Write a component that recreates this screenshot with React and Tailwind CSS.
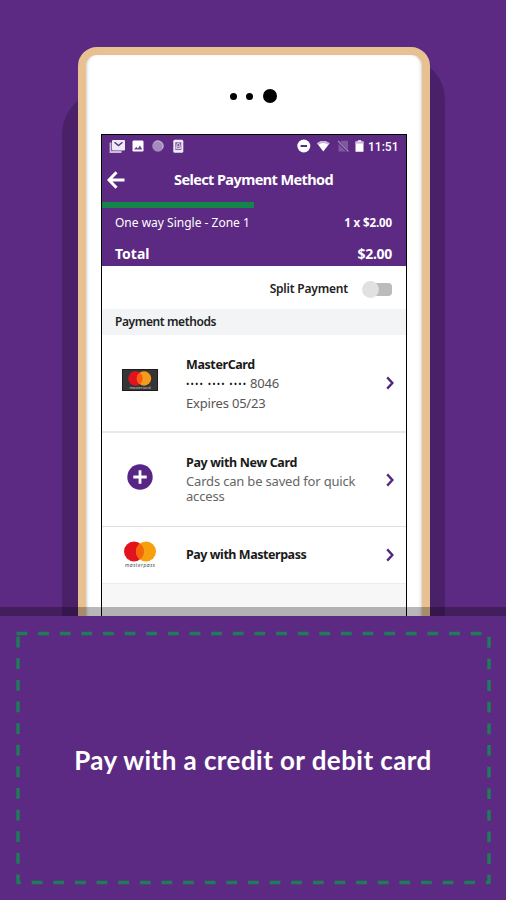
const DOTS = "•••• •••• ••••";

function Chevron() {
    return (
        <svg className="w-2 h-[14px] shrink-0" viewBox="0 0 8 14" fill="none">
            <path d="M1.2 1.4 L6.4 7 L1.2 12.6" stroke="#512480" strokeWidth="2.3" />
        </svg>
    );
}

function StatusBar() {
    return (
        <div className="flex items-center justify-between h-[23px] pl-[7px] pr-2">
            <svg className="w-[76px] h-4 -mt-px" viewBox="0 0 76 16">
                {/* mail stack */}
                <path d="M1.5 4.5 V14 H12.5" fill="none" stroke="#cdbddd" strokeWidth="1.8" />
                <rect x="3" y="2" width="13" height="10.5" rx="1" fill="#efe9f5" />
                <path d="M5.5 4.2 L9.5 7.6 L13.5 4.2" fill="none" stroke="#5c2a82" strokeWidth="1.3" />
                {/* picture */}
                <rect x="23.5" y="2.5" width="11" height="11" rx="1.2" fill="#fff" />
                <path d="M25 11.5 L27.3 8.8 L28.8 10.4 L31 7.5 L33.3 11.5 Z" fill="#6c4192" />
                {/* sync */}
                <circle cx="49" cy="8" r="5.8" fill="#a58abd" />
                <path d="M45 4.5 A5.3 5.3 0 0 1 53.5 10.5" fill="none" stroke="#c5b3d5" strokeWidth="1" />
                {/* phone lock */}
                <rect x="64.3" y="1.7" width="10" height="13" rx="1.5" fill="#efe9f5" />
                <rect x="66.3" y="4.3" width="6" height="7.7" fill="#7d5a9e" />
                <path d="M67.8 8 V6.8 A1.5 1.5 0 0 1 70.8 6.8 V8 M67.2 8.8 H71.4 V10.6 H67.2 Z" fill="none" stroke="#efe9f5" strokeWidth="0.9" />
            </svg>
            <div className="flex items-center">
                <svg className="w-[70px] h-4 -mt-px mr-px" viewBox="0 0 70 16">
                    <circle cx="6.8" cy="8" r="6.5" fill="#fff" />
                    <rect x="3.6" y="7" width="6.4" height="2" fill="#5c2a82" />
                    <path d="M20 5.3 Q26.3 0.6 32.6 5.3 L26.3 13.5 Z" fill="#fff" />
                    <path d="M20 5.3 Q26.3 0.6 32.6 5.3 L31.4 6.8 Q26.3 3.4 21.2 6.8 Z" fill="#c5b3d5" />
                    {/* no sim */}
                    <path d="M44.5 2.8 H51 V13.5 H41.5 V5.8 Z" fill="#7d5a9e" />
                    <path d="M40.5 3 L51.5 14" stroke="#5c2a82" strokeWidth="2.6" />
                    <path d="M41 3 L51.5 13.5" stroke="#a58abd" strokeWidth="1.1" />
                    <path d="M60.8 2.2 H64.2 V3.6 H66.5 V13.8 H58.5 V3.6 H60.8 Z" fill="#fff" />
                    <rect x="58.5" y="3.6" width="8" height="2" fill="#c9b9d8" />
                </svg>
                <span className="font-['Roboto'] font-medium text-[12px] leading-none w-[30px] whitespace-nowrap">11:51</span>
            </div>
        </div>
    );
}

function MasterCardMark() {
    return (
        <svg className="w-9 h-[22px]" viewBox="0 0 36 22">
            <rect x="0.5" y="0.5" width="35" height="21" fill="#373536" stroke="#1c1c1c" />
            <circle cx="13.5" cy="9.5" r="7.2" fill="#e2121f" />
            <circle cx="22" cy="9.5" r="7.2" fill="#f59b1c" />
            <path d="M17.75 3.7 A7.2 7.2 0 0 1 17.75 15.3 A7.2 7.2 0 0 1 17.75 3.7" fill="#ff5b10" />
            <text x="18" y="19.6" textAnchor="middle" textLength="21" fontSize="3.8" fontFamily="Open Sans, sans-serif" fill="#ddd">mastercard</text>
        </svg>
    );
}

function MasterpassMark() {
    return (
        <svg className="w-9 h-7" viewBox="0 0 36 28">
            <circle cx="12" cy="10.5" r="10" fill="#e2121f" />
            <circle cx="24" cy="10.5" r="10" fill="#f5a00c" />
            <path d="M18 2.5 A10 10 0 0 1 18 18.5 A10 10 0 0 1 18 2.5" fill="#f5660c" />
            <text x="18" y="25.5" textAnchor="middle" textLength="30" fontSize="5" fontStyle="italic" fontFamily="Open Sans, sans-serif" fill="#333">masterpass</text>
        </svg>
    );
}

function NewCardMark() {
    return (
        <svg className="w-[26px] h-[26px]" viewBox="0 0 26 26">
            <circle cx="13" cy="13" r="12.7" fill="#572586" />
            <path d="M13 6.3 V19.7 M6.3 13 H19.7" stroke="#fff" strokeWidth="2.8" />
        </svg>
    );
}

function PhoneScreen() {
    return (
        <div className="w-[306px] h-[500px] border-[1.5px] border-black bg-[#f7f7f7] font-['Noto_Sans',sans-serif]">
            <div className="h-[131px] bg-[#5c2a82] text-white">
                <StatusBar />
                <div className="flex items-center h-11 pl-[5px]">
                    <svg className="w-[18px] h-[18px]" viewBox="0 0 18 18" fill="none">
                        <path d="M9.5 1.2 L2 9 L9.5 16.8 M2 9 H17.5" stroke="#fff" strokeWidth="3" />
                    </svg>
                    <h1 className="ml-[49px] -mt-[2px] font-bold text-[14.5px] tracking-[-0.6px] leading-none whitespace-nowrap">Select Payment Method</h1>
                </div>
                <div className="w-[152px] h-[6px] bg-[#138548]" />
                <div className="flex justify-between items-center h-[29px] pl-[13px] pr-[14px] text-[12px]">
                    <span>One way Single - Zone 1</span>
                    <span className="font-bold text-[11.5px] tracking-[-0.1px]">1 x $2.00</span>
                </div>
                <div className="flex justify-between items-center h-[29px] pl-[13px] pr-[14px] pt-[3px] font-bold text-[14px]">
                    <span>Total</span>
                    <span className="tracking-[-0.3px]">$2.00</span>
                </div>
            </div>
            <div className="flex items-center justify-end h-[43px] pr-[14px] pt-[3px] bg-white">
                <span className="font-semibold text-[12px] tracking-[-0.2px] text-[#222]">Split Payment</span>
                <div className="flex items-center ml-[14px] w-[30px] h-[17px]">
                    <div className="w-[17px] h-[17px] rounded-full bg-[#e1e1e1] shrink-0 z-10" />
                    <div className="w-[21px] h-[13px] -ml-2 rounded-[4px] bg-[#bbb] shrink-0" />
                </div>
            </div>
            <div className="flex items-center h-[26px] pl-[13px] pb-px bg-[#f2f4f6] font-semibold text-[12px] tracking-[-0.4px] text-[#222]">
                Payment methods
            </div>

            <div className="flex items-center h-[98px] bg-white border-b-2 border-[#e9e9e9] pr-3">
                <div className="flex justify-center items-center w-[75px] pb-[6px]"><MasterCardMark /></div>
                <div className="flex-1 pl-[9px] pt-[2px] text-[13px] tracking-[-0.2px] leading-[19.5px] text-[#555]">
                    <p className="font-bold text-[12.5px] tracking-[-0.4px] text-[#1a1a1a]">MasterCard</p>
                    <p className="flex items-center">
                        <span className="w-16 text-[#111] text-[9px] tracking-[1.15px] whitespace-nowrap">{DOTS}</span>
                        <span>8046</span>
                    </p>
                    <p>Expires 05/23</p>
                </div>
                <Chevron />
            </div>
            <div className="flex items-center h-[94px] bg-white border-b border-[#dedede] pr-3">
                <div className="flex justify-center w-[75px] pb-[5px]"><NewCardMark /></div>
                <div className="flex-1 pl-[9px] pb-[3px] text-[13px] tracking-[-0.18px] leading-[15.5px] text-[#666]">
                    <p className="font-bold text-[12.5px] tracking-[-0.35px] leading-[22px] text-[#1a1a1a]">Pay with New Card</p>
                    <p className="whitespace-nowrap">Cards can be saved for quick<br />access</p>
                </div>
                <Chevron />
            </div>
            <div className="flex items-center h-[57px] bg-white border-b border-[#ececec] pr-3">
                <div className="flex justify-center w-[75px]"><MasterpassMark /></div>
                <p className="flex-1 pl-[9px] font-bold text-[12.5px] tracking-[-0.45px] text-[#1a1a1a]">Pay with Masterpass</p>
                <Chevron />
            </div>
        </div>
    );
}

export default function App() {
    return (
        <div className="w-[506px] h-[900px] bg-[#5c2a82] overflow-hidden">
            <section className="relative h-[616px] overflow-hidden pt-[47px] pl-[78px]">
                {/* shadow cast by the phone */}
                <div className="absolute left-[62px] top-[90px] w-[200px] h-[560px] rounded-tl-[45px] bg-[#4a2068]" />
                <div className="absolute left-[245px] top-[59px] w-[200px] h-[600px] rounded-tr-[40px] bg-[#4a2068]" />
                <div className="relative w-[352px] h-[640px] rounded-[19px] border-8 border-[#e8c193] bg-white pl-[15px] shadow-[inset_3px_0_3px_-2px_#ccc,inset_-3px_0_3px_-2px_#ccc]">
                    <div className="flex items-center h-[79px] pl-[129px] pt-[3px]">
                        <div className="w-[7px] h-[7px] rounded-full bg-black" />
                        <div className="w-[7px] h-[7px] rounded-full bg-black ml-[9px]" />
                        <div className="w-[14px] h-[14px] rounded-full bg-black ml-[10px]" />
                    </div>
                    <PhoneScreen />
                </div>
                <div className="absolute inset-x-0 bottom-0 h-[9px] bg-black/28" />
            </section>
            <section className="relative flex justify-center items-center h-[284px] pt-[3px]">
                <svg className="absolute inset-0 w-full h-full" viewBox="0 616 506 284" fill="none">
                    <path d="M16.5 633.5 H489 V882.5 H18 V633.5" stroke="#1f7c58" strokeWidth="3.4" strokeDasharray="10.8 10.83" />
                </svg>
                <p className="font-['Lato',sans-serif] font-bold text-[26px] tracking-[0.43px] leading-none text-white whitespace-nowrap">
                    Pay with a credit or debit card
                </p>
            </section>
        </div>
    );
}
